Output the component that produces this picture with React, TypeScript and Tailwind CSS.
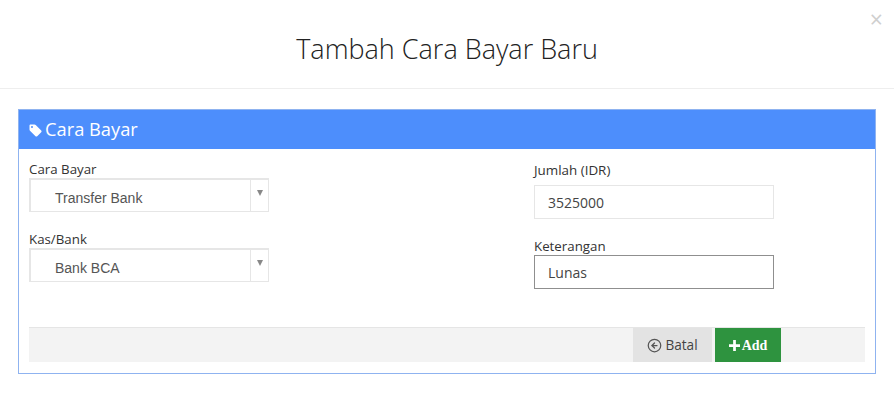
import { ArrowLeftCircle } from 'lucide-react';

const openSans = { fontFamily: '"Open Sans", sans-serif' };

function SelectBox({ value }: { value: string }) {
  return (
    <div className="flex h-[34px] w-[240px] border-2 border-r border-b border-[#e6e6e6]">
      <div className="flex flex-1 items-center pl-[24px] pt-[6px] font-['Liberation_Sans',sans-serif] text-[14px] text-[#555555]">
        {value}
      </div>
      <div className="flex w-[18px] justify-center border-l border-[#e6e6e6] pt-[10px]">
        <div className="h-0 w-0 border-x-[3.5px] border-t-[6px] border-x-transparent border-t-[#888888]" />
      </div>
    </div>
  );
}

export default function App() {
  return (
    <div className="h-[415px] w-[894px] overflow-hidden bg-white text-[#333333]" style={openSans}>
      <header className="relative flex h-[89px] items-center justify-center border-b border-[#eeeeee] pt-[13px] pb-[2px]">
        <h1 className="text-[27px] font-light text-[#222222]">Tambah Cara Bayar Baru</h1>
        <span className="absolute right-[11px] top-[8px] text-[23px] leading-[23px] text-[#cfcfcf]">×</span>
      </header>

      <section className="ml-[18px] mt-[20px] h-[265px] w-[858px] border border-[#8fb3f0]">
        <div className="flex h-[39px] items-center gap-[3px] bg-[#4d8efc] pb-[2px] pl-[10px] text-[18.3px] text-white">
          <svg width="13" height="13" viewBox="0 0 13 13" fill="#ffffff" className="mt-[3px]">
            <path d="M0.5 1.5C0.5 1 1 0.5 1.5 0.5H5.5C6 0.5 6.4 0.7 6.7 1L12.2 6.5C12.7 7 12.7 7.7 12.2 8.2L8.2 12.2C7.7 12.7 7 12.7 6.5 12.2L1 6.7C0.7 6.4 0.5 6 0.5 5.5ZM3 2A1 1 0 1 0 3 4A1 1 0 1 0 3 2Z" fillRule="evenodd" />
          </svg>
          Cara Bayar
        </div>

        <div className="flex h-[178px] pl-[10px] pr-[10px]">
          <div className="w-[505px] pt-[11px]">
            <label className="block h-[18px] text-[13.3px] leading-[18px]">Cara Bayar</label>
            <SelectBox value="Transfer Bank" />
            <label className="mt-[18px] block h-[18px] text-[13.3px] leading-[18px]">Kas/Bank</label>
            <SelectBox value="Bank BCA" />
          </div>
          <div className="flex-1 pt-[12px]">
            <label className="block h-[24px] text-[13.4px] leading-[18px]">Jumlah (IDR)</label>
            <div className="flex h-[34px] w-[240px] items-center border border-[#e6e6e6] pl-[13px] text-[14px] text-[#444444]">
              3525000
            </div>
            <label className="mt-[18px] block h-[18px] text-[13.3px] leading-[18px]">Keterangan</label>
            <div className="flex h-[34px] w-[240px] items-center border border-[#8f8f8f] pl-[13px] text-[14px] text-[#444444]">
              Lunas
            </div>
          </div>
        </div>

        <div className="mx-[10px] flex h-[35px] w-[836px] border-t border-[#e5e5e5] bg-[#f3f3f3] pl-[604px]">
          <button className="flex h-[34px] w-[79px] items-center justify-center gap-[3px] bg-[#e3e3e3] text-[13.6px] text-[#444444]">
            <ArrowLeftCircle size={15} strokeWidth={2} className="text-[#555555]" />
            Batal
          </button>
          <button className="ml-[3px] flex h-[34px] w-[66px] items-center justify-center gap-[2px] bg-[#2e933f] font-['Liberation_Serif',serif] text-[14px] font-bold text-white">
            <svg width="11" height="11" viewBox="0 0 12 12" fill="#ffffff">
              <path d="M4.5 0H7.5V4.5H12V7.5H7.5V12H4.5V7.5H0V4.5H4.5Z" />
            </svg>
            Add
          </button>
        </div>
      </section>
    </div>
  );
}
